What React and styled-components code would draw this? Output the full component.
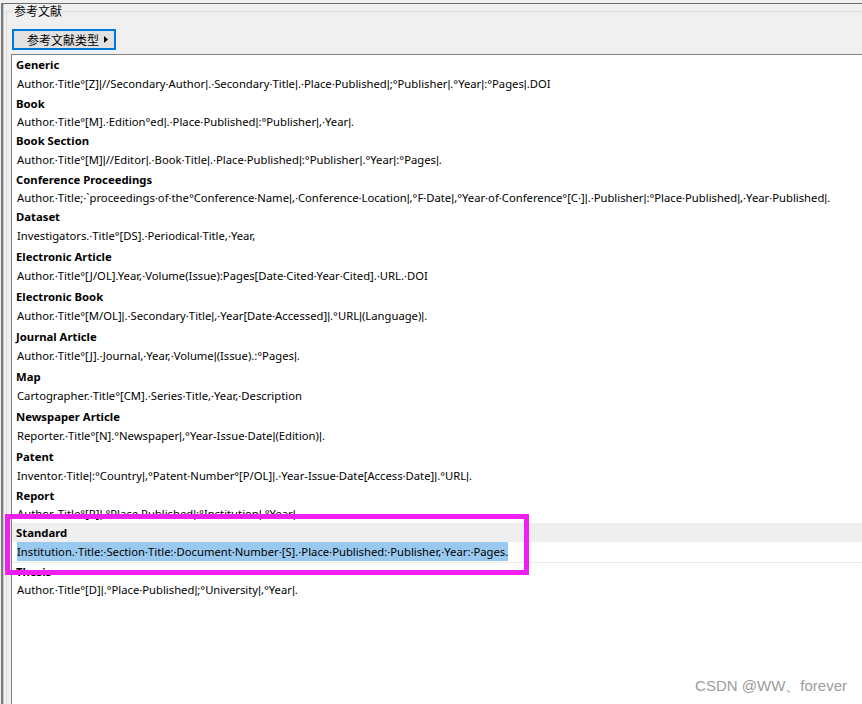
import styled, { createGlobalStyle } from 'styled-components';

/* 参考文献格式列表 — 每条: 类型名 + 模板. compact 行距略小 (与原界面一致) */
const ENTRIES = [
  { title: 'Generic', text: 'Author.·Title°[Z]|//Secondary·Author|.·Secondary·Title|.·Place·Published|;°Publisher|.°Year|:°Pages|.DOI' },
  { title: 'Book', text: 'Author.·Title°[M].·Edition°ed|.·Place·Published|:°Publisher|,·Year|.', compact: true },
  { title: 'Book Section', text: 'Author.·Title°[M]|//Editor|.·Book·Title|.·Place·Published|:°Publisher|.°Year|:°Pages|.' },
  { title: 'Conference Proceedings', text: 'Author.·Title;·`proceedings·of·the°Conference·Name|,·Conference·Location|,°F·Date|,°Year·of·Conference°[C·]|.·Publisher|:°Place·Published|,·Year·Published|.', compact: true },
  { title: 'Dataset', text: 'Investigators.·Title°[DS].·Periodical·Title,·Year,' },
  { title: 'Electronic Article', text: 'Author.·Title°[J/OL].Year,·Volume(Issue):Pages[Date·Cited·Year·Cited].·URL.·DOI' },
  { title: 'Electronic Book', text: 'Author.·Title°[M/OL]|.·Secondary·Title|,·Year[Date·Accessed]|.°URL|(Language)|.' },
  { title: 'Journal Article', text: 'Author.·Title°[J].·Journal,·Year,·Volume|(Issue).:°Pages|.' },
  { title: 'Map', text: 'Cartographer.·Title°[CM].·Series·Title,·Year,·Description' },
  { title: 'Newspaper Article', text: 'Reporter.·Title°[N].°Newspaper|,°Year-Issue·Date|(Edition)|.' },
  { title: 'Patent', text: 'Inventor.·Title|:°Country|,°Patent·Number°[P/OL]|.·Year-Issue·Date[Access·Date]|.°URL|.' },
  { title: 'Report', text: 'Author.·Title°[R]|.°Place·Published|:°Institution|,°Year|.', compact: true },
  { title: 'Standard', text: 'Institution.·Title:·Section·Title:·Document·Number·[S].·Place·Published:·Publisher,·Year:·Pages.', selected: true },
  { title: 'Thesis', text: 'Author.·Title°[D]|.°Place·Published|;°University|,°Year|.', compact: true },
];

/* 竖线字段分隔符在原字体里很窄 — 用窄竖线字形单独渲染 */
function renderTemplate(text) {
  const parts = text.split('|');
  return parts.flatMap((p, i) => (i === 0 ? [p] : [<Bar key={i}>|</Bar>, p]));
}

const GlobalStyle = createGlobalStyle`
  html, body {
    margin: 0;
    padding: 0;
    background: #f0f0f0;
    overflow: hidden;
  }
  body {
    width: 862px;
    height: 704px;
    position: relative;
  }
`;

export default function App() {
  return (
    <>
      <GlobalStyle />
      <Window>
        <GroupBox>
          <Legend>参考文献</Legend>
          <TypeButton>
            参考文献类型
            <svg width="4" height="7" viewBox="0 0 4 7">
              <path d="M0 0 L4 3.5 L0 7 Z" fill="#000" />
            </svg>
          </TypeButton>
          <ListBox>
            {ENTRIES.map((e) => (
              <Entry key={e.title}>
                <Heading $compact={e.compact} $selected={e.selected}>{e.title}</Heading>
                <Template $compact={e.compact} $selected={e.selected}>
                  {e.selected
                    ? <Selection>{renderTemplate(e.text)}</Selection>
                    : renderTemplate(e.text)}
                </Template>
              </Entry>
            ))}
          </ListBox>
        </GroupBox>
      </Window>
      {/* 截图上的标注框 */}
      <Marker />
      <Watermark>CSDN @WW、forever</Watermark>
    </>
  );
}

/* ── styled-components ── */

const Window = styled.div`
  margin: 3px 0 0 1px;
  height: 720px;
  border-top: 1px solid #6e6e6e;
  border-left: 2px solid #7a7a7a;
  box-shadow: inset 1px 0 0 #c8c8c8;
  display: flex;
  flex-direction: column;
`;

const GroupBox = styled.fieldset`
  margin: 0 0 0 3px;
  padding: 0;
  width: 900px;
  min-width: 0;
  height: 740px;
  border: 1px solid #dcdcdc;
  display: flex;
  flex-direction: column;
  align-items: flex-start;
`;

const Legend = styled.legend`
  margin-left: 6px;
  padding: 0 1px;
  font-family: "Noto Sans CJK SC", "Noto Sans", sans-serif;
  font-size: 12px;
  line-height: 14px;
  color: #000;
`;

const TypeButton = styled.button`
  margin: 11px 0 0 5px;
  width: 104px;
  height: 21px;
  padding: 0 0 0 14px;
  display: flex;
  align-items: center;
  gap: 5px;
  background: #e1e1e1;
  border: 1px solid #0078d7;
  box-shadow: inset 0 0 0 1px #0078d7;
  border-radius: 0;
  font-family: "Noto Sans CJK SC", "Noto Sans", sans-serif;
  font-size: 12px;
  color: #000;
`;

const ListBox = styled.div`
  margin: 4px 0 0 4px;
  align-self: stretch;
  flex: 1;
  background: #fff;
  border-top: 1px solid #828282;
  border-left: 1px solid #828282;
  font-family: "Noto Sans", "Segoe UI", sans-serif;
  color: #000;
`;

const Entry = styled.div`
  display: flex;
  flex-direction: column;
`;

const Heading = styled.div`
  height: ${({ $compact }) => ($compact ? '17px' : '19px')};
  line-height: ${({ $compact }) => ($compact ? '17px' : '19px')};
  padding-left: 4px;
  font-size: 11.3px;
  font-weight: 700;
  white-space: nowrap;
  background: ${({ $selected }) => ($selected ? '#efefef' : 'transparent')};
`;

const Template = styled.div`
  box-sizing: border-box;
  height: ${({ $compact }) => ($compact ? '19px' : '21px')};
  line-height: 19px;
  padding-left: 5px;
  font-size: 11.25px;
  white-space: nowrap;
  border-bottom: ${({ $selected }) => ($selected ? '1px solid #ececec' : 'none')};
`;

const Bar = styled.span`
  font-family: "Liberation Sans", Arial, sans-serif;
`;

const Selection = styled.span`
  display: inline-block;
  background: #99c9ef;
  line-height: 19px;
`;

const Marker = styled.div`
  position: absolute;
  left: 5px;
  top: 514px;
  width: 524px;
  height: 61px;
  box-sizing: border-box;
  border: 5px solid #f01ef0;
  pointer-events: none;
`;

const Watermark = styled.div`
  position: absolute;
  right: 15px;
  bottom: 8px;
  font-family: "Liberation Sans", Arial, sans-serif;
  font-size: 15px;
  color: #9c9c9c;
  white-space: nowrap;
`;
